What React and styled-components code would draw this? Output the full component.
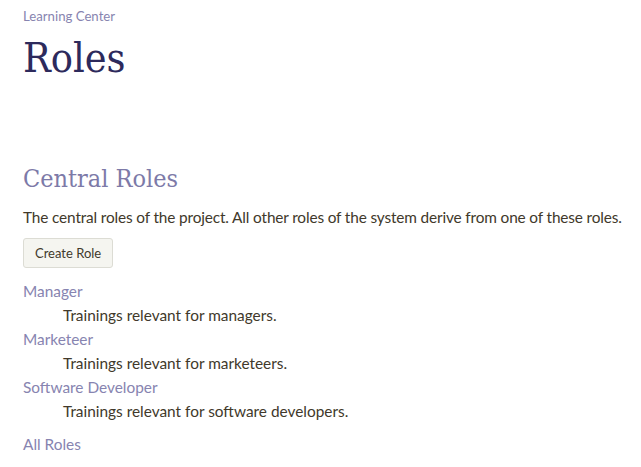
import styled, { createGlobalStyle } from "styled-components";

const GlobalStyle = createGlobalStyle`
  body {
    margin: 0;
    background: #ffffff;
    font-family: Lato, "Noto Sans", sans-serif;
    color: #41392b;
  }
`;

const Page = styled.main`
  padding: 7px 8px 0 23px;
`;

const Breadcrumb = styled.a`
  display: block;
  font-size: 13.2px;
  line-height: 18px;
  color: #8784b0;
  text-decoration: none;
`;

const Title = styled.h1`
  margin: 8px 0 0;
  font-family: "DejaVu Serif Condensed", "DejaVu Serif", serif;
  font-stretch: condensed;
  font-weight: normal;
  font-size: 41px;
  line-height: 50px;
  color: #2d2a5c;
`;

const Section = styled.section`
  margin-top: 80px;
`;

const SectionTitle = styled.h2`
  margin: 0;
  font-family: "DejaVu Serif Condensed", "DejaVu Serif", serif;
  font-stretch: condensed;
  font-weight: normal;
  font-size: 25px;
  line-height: 32px;
  color: #7d7aa8;
`;

const Lead = styled.p`
  margin: 10px 0 9px;
  font-size: 15.4px;
  line-height: 24px;
  white-space: nowrap;
  letter-spacing: -0.15px;
`;

const Button = styled.button`
  font-family: inherit;
  font-size: 13px;
  color: #41392b;
  height: 30px;
  padding: 0 11px;
  background: #f5f5f0;
  border: 1px solid #dcdcd4;
  border-radius: 3px;
`;

const RoleList = styled.dl`
  margin: 11px 0 0;
  font-size: 15.4px;
  line-height: 24px;
`;

const RoleName = styled.dt`
  a {
    color: #8784b0;
    text-decoration: none;
  }
`;

const RoleDesc = styled.dd`
  margin-left: 40px;
`;

const AllLink = styled.a`
  display: block;
  margin-top: 9px;
  font-size: 15.4px;
  line-height: 24px;
  color: #8784b0;
  text-decoration: none;
`;

const roles = [
  { name: "Manager", desc: "Trainings relevant for managers." },
  { name: "Marketeer", desc: "Trainings relevant for marketeers." },
  { name: "Software Developer", desc: "Trainings relevant for software developers." },
];

export default function App() {
  return (
    <>
      <GlobalStyle />
      <Page>
        <Breadcrumb href="#">Learning Center</Breadcrumb>
        <Title>Roles</Title>
        <Section>
          <SectionTitle>Central Roles</SectionTitle>
          <Lead>
            The central roles of the project. All other roles of the system derive from one of these roles.
          </Lead>
          <Button>Create Role</Button>
          <RoleList>
            {roles.map((r) => (
              <div key={r.name}>
                <RoleName>
                  <a href="#">{r.name}</a>
                </RoleName>
                <RoleDesc>{r.desc}</RoleDesc>
              </div>
            ))}
          </RoleList>
          <AllLink href="#">All Roles</AllLink>
        </Section>
      </Page>
    </>
  );
}
